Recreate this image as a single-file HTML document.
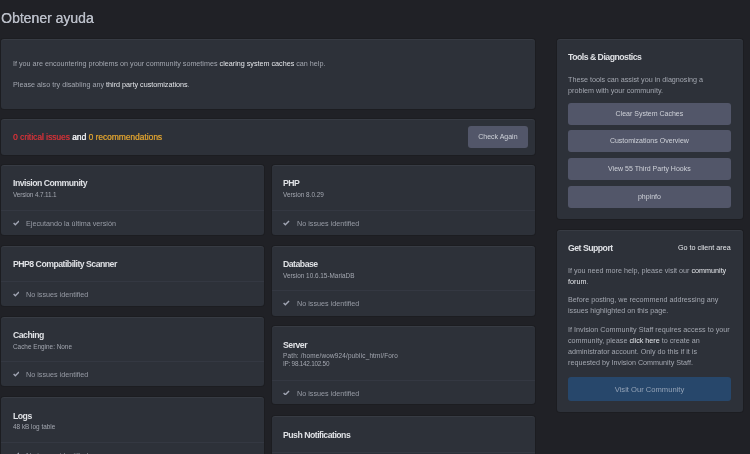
<!DOCTYPE html>
<html><head><meta charset="utf-8">
<style>
*{box-sizing:border-box;margin:0;padding:0}
html,body{width:750px;height:454px;overflow:hidden;background:#202126}
body{font-family:"Liberation Sans",sans-serif;position:relative;color:#a7abb3}
.abs{position:absolute}
.t,.btn,h1{will-change:transform}
.box{position:absolute;background:#2d3139;border-radius:3px;box-shadow:0 0 0 1px rgba(0,0,0,0.12), inset 0 1px 0 rgba(255,255,255,0.05)}
.t{position:absolute;white-space:nowrap;line-height:1}
h1{position:absolute;left:1px;top:10.7px;font-size:14px;font-weight:normal;color:#b9bdc7;text-shadow:0.3px 0 0 currentColor;line-height:1;white-space:nowrap}
.body{font-size:7.2px;color:#a3a7b0}
.lnk{color:#e4e6ea}
.h{font-size:8.7px;font-weight:bold;color:#dfe1e5;letter-spacing:-0.5px;margin-top:-0.4px}
.sub{font-size:6.4px;color:#a3a7b0}
.sep{position:absolute;left:0;right:0;height:1px;background:#343842}
.ok{font-size:7.2px;color:#989ca6}
.chk{position:absolute;width:6.6px;height:5.7px;margin-top:-0.2px}
.btn{position:absolute;background:#525669;border-radius:3px;color:#cfd2d9;font-size:7px;text-align:center;white-space:nowrap}
</style></head><body>
<h1>Obtener ayuda</h1>

<!-- panel 1 -->
<div class="box" style="left:1px;top:39px;width:534px;height:69.8px">
  <div class="t body" style="left:11.6px;top:20.5px">If you are encountering problems on your community sometimes <span class="lnk">clearing system caches</span> can help.</div>
  <div class="t body" style="left:11.6px;top:41.5px">Please also try disabling any <span class="lnk">third party customizations</span>.</div>
</div>

<!-- panel 2 -->
<div class="box" style="left:1px;top:119px;width:534px;height:35.8px">
  <div class="t" style="left:11.6px;top:14px;font-size:8.4px;font-weight:normal;text-shadow:0.3px 0 0 currentColor"><span style="color:#c93238">0 critical issues</span> <span style="color:#eef0f3">and</span> <span style="color:#d59c30">0 recommendations</span></div>
  <div class="btn" style="left:466.5px;top:7px;width:59.8px;height:21.6px;line-height:22px">Check Again</div>
</div>

<!-- left column -->
<div class="box" style="left:1px;top:165px;width:262.5px;height:70px">
  <div class="t h" style="left:11.6px;top:14.5px">Invision Community</div>
  <div class="t sub" style="left:11.6px;top:26.5px;letter-spacing:-0.15px">Version 4.7.11.1</div>
  <div class="sep" style="top:45px"></div>
  <svg class="chk" style="left:11.6px;top:55px" viewBox="0 0 14 12"><path d="M1.3 6.3 L5 9.9 L12.8 2.2" fill="none" stroke="#a2a6b4" stroke-width="3.1"/></svg>
  <div class="t ok" style="left:25.1px;top:55px">Ejecutando la última versión</div>
</div>

<div class="box" style="left:1px;top:246px;width:262.5px;height:60px">
  <div class="t h" style="left:11.6px;top:14.5px">PHP8 Compatibility Scanner</div>
  <div class="sep" style="top:35.4px"></div>
  <svg class="chk" style="left:11.6px;top:45px" viewBox="0 0 14 12"><path d="M1.3 6.3 L5 9.9 L12.8 2.2" fill="none" stroke="#a2a6b4" stroke-width="3.1"/></svg>
  <div class="t ok" style="left:25.1px;top:45px">No issues identified</div>
</div>

<div class="box" style="left:1px;top:317px;width:262.5px;height:69px">
  <div class="t h" style="left:11.6px;top:14.5px">Caching</div>
  <div class="t sub" style="left:11.6px;top:26.5px">Cache Engine: None</div>
  <div class="sep" style="top:44.3px"></div>
  <svg class="chk" style="left:11.6px;top:54px" viewBox="0 0 14 12"><path d="M1.3 6.3 L5 9.9 L12.8 2.2" fill="none" stroke="#a2a6b4" stroke-width="3.1"/></svg>
  <div class="t ok" style="left:25.1px;top:54px">No issues identified</div>
</div>

<div class="box" style="left:1px;top:397px;width:262.5px;height:70px">
  <div class="t h" style="left:11.6px;top:15.2px">Logs</div>
  <div class="t sub" style="left:11.6px;top:26.5px">48 kB log table</div>
  <div class="sep" style="top:45px"></div>
  <svg class="chk" style="left:11.6px;top:55px" viewBox="0 0 14 12"><path d="M1.3 6.3 L5 9.9 L12.8 2.2" fill="none" stroke="#a2a6b4" stroke-width="3.1"/></svg>
  <div class="t ok" style="left:25.1px;top:55px">No issues identified</div>
</div>

<!-- right column -->
<div class="box" style="left:272px;top:165px;width:262.5px;height:70px">
  <div class="t h" style="left:11.1px;top:14.5px">PHP</div>
  <div class="t sub" style="left:11.1px;top:26.5px">Version 8.0.29</div>
  <div class="sep" style="top:45px"></div>
  <svg class="chk" style="left:11.1px;top:55px" viewBox="0 0 14 12"><path d="M1.3 6.3 L5 9.9 L12.8 2.2" fill="none" stroke="#a2a6b4" stroke-width="3.1"/></svg>
  <div class="t ok" style="left:24.6px;top:55px">No issues identified</div>
</div>

<div class="box" style="left:272px;top:246px;width:262.5px;height:70px">
  <div class="t h" style="left:11.1px;top:14.5px">Database</div>
  <div class="t sub" style="left:11.1px;top:26.5px">Version 10.6.15-MariaDB</div>
  <div class="sep" style="top:44px"></div>
  <svg class="chk" style="left:11.1px;top:54px" viewBox="0 0 14 12"><path d="M1.3 6.3 L5 9.9 L12.8 2.2" fill="none" stroke="#a2a6b4" stroke-width="3.1"/></svg>
  <div class="t ok" style="left:24.6px;top:54px">No issues identified</div>
</div>

<div class="box" style="left:272px;top:326.3px;width:262.5px;height:78.2px">
  <div class="t h" style="left:11.1px;top:15.2px">Server</div>
  <div class="t sub" style="left:11.1px;top:26.3px;letter-spacing:0.18px">Path: /home/wow924/public_html/Foro</div>
  <div class="t sub" style="left:11.1px;top:35.2px;letter-spacing:-0.25px">IP: 98.142.102.50</div>
  <div class="sep" style="top:54px"></div>
  <svg class="chk" style="left:11.1px;top:63.7px" viewBox="0 0 14 12"><path d="M1.3 6.3 L5 9.9 L12.8 2.2" fill="none" stroke="#a2a6b4" stroke-width="3.1"/></svg>
  <div class="t ok" style="left:24.6px;top:63.7px">No issues identified</div>
</div>

<div class="box" style="left:272px;top:416px;width:262.5px;height:70px">
  <div class="t h" style="left:11.1px;top:15.2px">Push Notifications</div>
  <div class="sep" style="top:35.5px"></div>
</div>

<!-- sidebar -->
<div class="box" style="left:557px;top:39px;width:186px;height:180px">
  <div class="t h" style="left:11px;top:14px">Tools &amp; Diagnostics</div>
  <div class="t body" style="left:11px;top:35px;line-height:11px;white-space:normal;width:170px">These tools can assist you in diagnosing a<br>problem with your community.</div>
  <div class="btn" style="left:11px;top:63.6px;width:162.8px;height:21.8px;line-height:21.8px">Clear System Caches</div>
  <div class="btn" style="left:11px;top:91.3px;width:162.8px;height:21.8px;line-height:21.8px">Customizations Overview</div>
  <div class="btn" style="left:11px;top:119.1px;width:162.8px;height:21.8px;line-height:21.8px">View 55 Third Party Hooks</div>
  <div class="btn" style="left:11px;top:147.2px;width:162.8px;height:21.8px;line-height:21.8px">phpinfo</div>
</div>

<div class="box" style="left:557px;top:230px;width:186px;height:182.3px">
  <div class="t h" style="left:11px;top:14.5px">Get Support</div>
  <div class="t" style="left:120.8px;top:14px;font-size:7.2px;color:#e4e6ea">Go to client area</div>
  <div class="t body" style="left:11px;top:35.8px;line-height:10.9px;white-space:normal;width:175px">If you need more help, please visit our <span class="lnk">community<br>forum</span>.</div>
  <div class="t body" style="left:11px;top:64.8px;line-height:10.9px;white-space:normal;width:175px">Before posting, we recommend addressing any<br>issues highlighted on this page.</div>
  <div class="t body" style="left:11px;top:93.5px;line-height:11px;white-space:normal;width:175px">If Invision Community Staff requires access to your<br>community, please <span class="lnk">click here</span> to create an<br>administrator account. Only do this if it is<br>requested by Invision Community Staff.</div>
  <div class="btn" style="left:11px;top:147px;width:163px;height:24px;line-height:25.6px;background:#27476b;color:#93a2b6;font-size:7.6px">Visit Our Community</div>
</div>
</body></html>
